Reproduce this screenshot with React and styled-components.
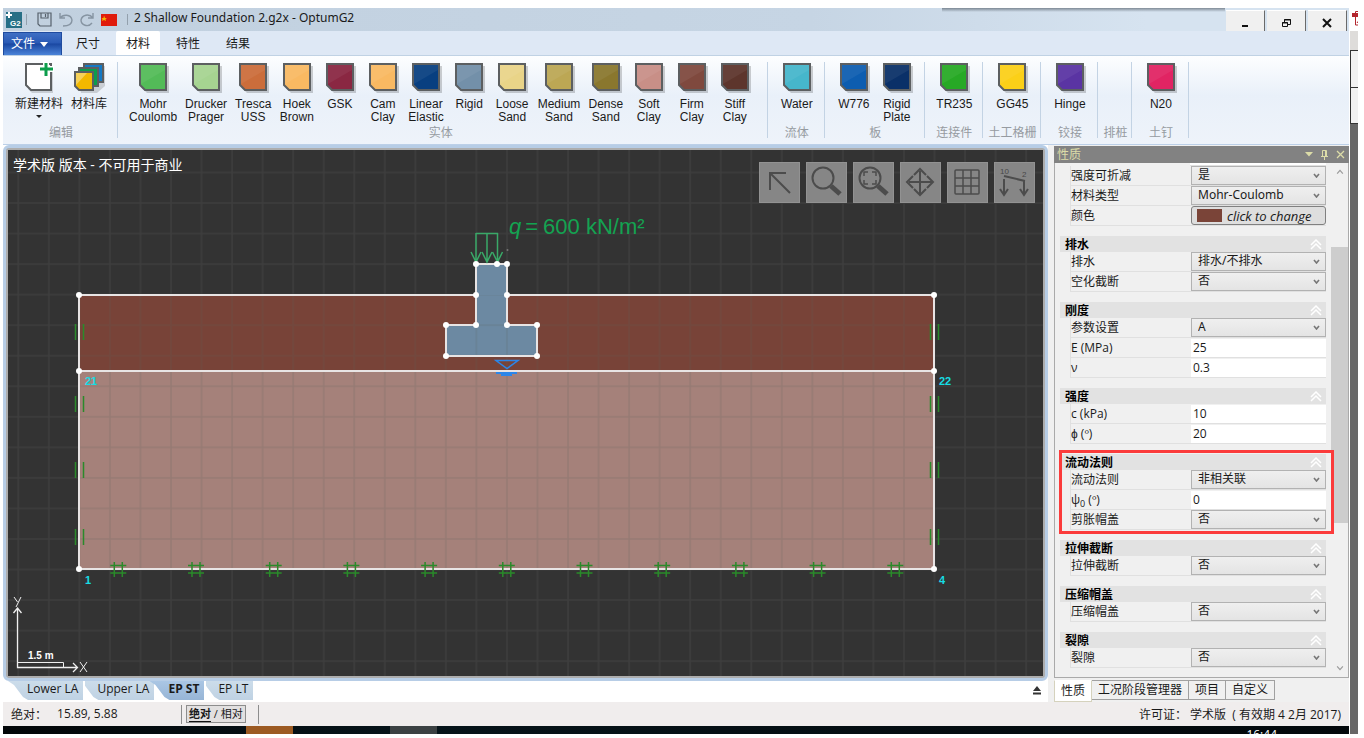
import React from 'react';
import styled, { createGlobalStyle } from 'styled-components';

const GlobalStyle = createGlobalStyle`
  * {
    box-sizing: border-box;
  }
  html, body, #root {
    height: 100%;
  }
  body {
    margin: 0;
    background: #fff;
    color: #1a1a1a;
    font-family: 'Open Sans', 'Noto Sans CJK SC', sans-serif;
    font-size: 12px;
  }
  button, input, select {
    font: inherit;
    color: inherit;
  }
  button {
    border: 0;
    padding: 0;
    background: none;
  }
`;

const Desktop = styled.div`
  display: flex;
  height: 100vh;
  min-height: 560px;
  padding: 8px 6px 4px 3px;
`;

const Main = styled.div`
  flex: 1;
  min-width: 0;
  display: flex;
  flex-direction: column;
`;

/* title bar */

const TitleBar = styled.header`
  position: relative;
  display: flex;
  align-items: center;
  height: 23px;
  padding: 0 2px 0 3px;
  background: linear-gradient(90deg, #c1d0df, #c6d5e4 60%, #d6e3f0 85%);

  &::before {
    content: '';
    position: absolute;
    top: 0;
    right: 124px;
    width: 283px;
    height: 4px;
    background: linear-gradient(rgba(70, 80, 90, 0.6), transparent);
  }
`;

const Title = styled.h1`
  flex: 1;
  margin: 0;
  padding: 0 0 3px 6px;
  font-family: 'Noto Sans', sans-serif;
  font-size: 12px;
  font-weight: 400;
  line-height: 16px;
  white-space: nowrap;
`;

const QuickButton = styled.button`
  display: flex;
  align-items: center;
  justify-content: center;
  width: ${(p) => p.$width || 22}px;
  height: 22px;
`;

const TitleDivider = styled.span`
  width: 1px;
  height: 11px;
  margin: ${(p) => p.$margin};
  background: #93a0ad;
`;

const WindowButtons = styled.div`
  display: flex;
  align-self: flex-end;
  gap: 2px;
`;

const WindowButton = styled.button`
  display: flex;
  align-items: center;
  justify-content: center;
  width: 39px;
  height: 21px;
  padding-top: 4px;
  background: #f0f0f0;
  border-top: 1px solid #fff;
  border-right: 1px solid #6a6a6a;
`;

/* ribbon */

const RibbonTabs = styled.nav`
  display: flex;
  align-items: flex-end;
  height: 25px;
  background: #dee8f5;
  border-bottom: 1px solid #c0d2e4;
`;

const FileButton = styled.button`
  width: 59px;
  height: 23px;
  padding-left: 7px;
  text-align: left;
  color: #fff;
  line-height: 20px;
  background: linear-gradient(#3f6fc4, #2a5ab5 45%, #1a48a2 50%, #4b83d8);
  border: 1px solid #1f4b9f;
  border-bottom: 0;

  svg {
    margin-left: 5px;
  }
`;

const RibbonTab = styled.button`
  width: 44px;
  height: 24px;
  margin-left: ${(p) => (p.$first ? 4 : 0)}px;
  border-radius: 2px 2px 0 0;
  background: ${(p) => (p.$active ? '#fff' : 'transparent')};
  margin-right: 6px;
`;

const Ribbon = styled.div`
  display: flex;
  height: 89px;
  padding: 6px 0 6px 1px;
  overflow: hidden;
  background: linear-gradient(#fdfeff, #e9f0f9 45%, #eef3fa);
  border-bottom: 1px solid #bcd0e8;
`;

const RibbonGroup = styled.section`
  flex: none;
  display: flex;
  flex-direction: column;
  justify-content: space-between;
  align-items: center;
  padding: 0 ${(p) => (p.$roomy ? 11 : 6)}px 0 7px;
  border-right: 1px solid #c3d3e4;
`;

const GroupTools = styled.div`
  display: flex;
  height: 64px;
`;

const GroupTitle = styled.h2`
  margin: 0 -2px;
  font-size: 12px;
  font-weight: 400;
  line-height: 10px;
  color: #969ba1;
`;

const Tool = styled.button`
  display: flex;
  flex-direction: column;
  align-items: center;
  min-width: 43px;
  padding: 0 4px;
  font-family: 'Liberation Sans', 'Noto Sans CJK SC', sans-serif;
  line-height: 13px;
  white-space: pre-line;

  > svg {
    flex: none;
    margin-bottom: 5px;
  }
`;

const DropMark = styled.span`
  margin-top: 4px;
  border: 3px solid transparent;
  border-top-color: #222;
  border-bottom: 0;
`;

/* workspace */

const Workspace = styled.div`
  flex: 1;
  min-height: 0;
  display: flex;
  gap: 6px;
  background: #f0f0f0;
`;

const Drawing = styled.main`
  flex: 1;
  min-width: 0;
  display: flex;
  flex-direction: column;
  background: #fff;
`;

const CanvasFrame = styled.div`
  flex: 1;
  min-height: 0;
  position: relative;
  border: 3px solid #b7cde6;
  border-radius: 6px;
  background: #adadad;
  padding: 2px;
`;

const Model = styled.svg`
  display: block;
  width: 100%;
  height: 100%;
  background: #333;
`;

const Watermark = styled.p`
  position: absolute;
  top: 7px;
  left: 7px;
  margin: 0;
  color: #fff;
  font-size: 14px;
  line-height: 20px;
`;

const CanvasTools = styled.div`
  position: absolute;
  top: 14px;
  right: 10px;
  display: flex;
  gap: 6px;
`;

const CanvasTool = styled.button`
  width: 41px;
  height: 41px;
  background: #868686;
  border: 1px solid #929292;

  svg {
    display: block;
  }
`;

const StageBar = styled.div`
  display: flex;
  align-items: flex-start;
  height: 21px;
  padding: 0 7px 0 12px;
`;

const StageTab = styled.button`
  position: relative;
  z-index: ${(p) => (p.$active ? 5 : p.$level)};
  height: 19px;
  margin-left: -7px;
  padding: 0 5px 3px 19px;
  line-height: 14px;
  font-weight: ${(p) => (p.$active ? 700 : 400)};
  background: ${(p) =>
    p.$active
      ? 'linear-gradient(#aac6e4, #97b5d6)'
      : 'linear-gradient(#ccdcea, #bfd2e3)'};
  border-right: 2px solid #fff;
  clip-path: polygon(0 0, 100% 0, 100% 100%, 20px 100%, 15px 16px, 6px 4px);
`;

const Eject = styled.button`
  margin: 5px 0 0 auto;
  line-height: 0;
`;

/* properties */

const Side = styled.aside`
  width: 295px;
  flex: none;
  display: flex;
  flex-direction: column;
  padding-top: 1px;
`;

const PanelTitle = styled.div`
  display: flex;
  align-items: center;
  gap: 8px;
  height: 17px;
  padding: 0 4px 0 3px;
  background: #828282;
  color: #dcdca8;

  h2 {
    flex: 1;
    margin: 0;
    font-size: 12px;
    font-weight: 400;
    line-height: 16px;
  }
  button {
    line-height: 0;
  }
`;

const PanelBody = styled.div`
  flex: 1;
  min-height: 0;
  display: flex;
  gap: 5px;
  padding-left: 5px;
  background: #f0f0f0;
  border: 1px solid #aaa;
  border-top: 0;
`;

const Properties = styled.form`
  flex: 1;
  min-width: 0;
`;

const CutRow = styled.div`
  height: 3px;
  margin: 0 0 0 130px;
  border-bottom: 1px solid #e0e0e0;
  background: #fff;
`;

const PropertyGroup = styled.section`
  position: relative;
  margin-bottom: 10px;
`;

const GroupHeader = styled.h3`
  display: flex;
  align-items: center;
  justify-content: space-between;
  height: 16px;
  margin: 0;
  padding: 0 4px 0 5px;
  font-size: 12px;
  font-weight: 700;
  color: #000;
  background: #e2e2e2;
`;

const Row = styled.div`
  display: grid;
  grid-template-columns: 120px 1fr;
  align-items: center;
  height: 20px;
  margin-left: 10px;
  border-left: 1px solid #e0e0e0;
  border-bottom: 1px solid #e0e0e0;

  label {
    line-height: 16px;
    white-space: nowrap;
  }
  sub {
    font-size: 9px;
    line-height: 0;
  }
`;

const SelectBox = styled.div`
  position: relative;

  select {
    display: block;
    width: 100%;
    height: 19px;
    padding: 0 20px 2px 6px;
    line-height: 14px;
    appearance: none;
    border: 1px solid #b2b2b2;
    border-radius: 0;
    background: linear-gradient(#efefef, #e4e4e4);
    font-family: 'Noto Sans', 'Noto Sans CJK SC', sans-serif;
  }
  svg {
    position: absolute;
    right: 6px;
    top: 7px;
    pointer-events: none;
  }
`;

const ValueInput = styled.input`
  width: 100%;
  height: 18px;
  padding: 0 2px;
  border: 0;
  background: #fff;
`;

const ColorButton = styled.button`
  display: flex;
  align-items: center;
  gap: 5px;
  width: 100%;
  height: 19px;
  padding: 0 5px;
  border: 1px solid #808080;
  border-radius: 3px;
  background: #dedede;
  font-size: 13px;
  font-style: italic;
  line-height: 16px;

  span {
    width: 25px;
    height: 13px;
    background: #7a4438;
  }
`;

const Highlight = styled.span`
  position: absolute;
  top: -4px;
  left: -1px;
  right: -8px;
  bottom: -4px;
  border: 3px solid #fb3b3b;
  pointer-events: none;
`;

const ScrollBar = styled.div`
  display: flex;
  flex-direction: column;
  align-items: center;
  width: 17px;
  padding: 6px 0;

  svg:last-child {
    margin-top: auto;
  }
`;

const Thumb = styled.div`
  width: 17px;
  height: 276px;
  margin-top: 72px;
  background: #cdcdcd;
`;

const PanelTabs = styled.div`
  display: flex;
  align-items: flex-start;
  height: 24px;
  padding-top: 2px;
`;

const PanelTab = styled.button`
  height: ${(p) => (p.$active ? 22 : 20)}px;
  padding: 0 6px;
  line-height: 16px;
  background: ${(p) => (p.$active ? '#fff' : '#f0f0f0')};
  border: 1px solid ${(p) => (p.$active ? '#d5d2bd' : '#a0a0a0')};
  border-left-width: ${(p) => (p.$active ? 1 : 0)}px;
  border-top-color: ${(p) => (p.$active ? '#fff' : '#a0a0a0')};
`;

/* bottom bars */

const StatusBar = styled.footer`
  display: flex;
  align-items: center;
  height: 24px;
  padding: 0 8px;
  background: #f0eded;
  white-space: pre;
`;

const Coordinates = styled.div`
  display: flex;
  gap: 10px;
  width: 170px;
`;

const StatusDivider = styled.span`
  width: 1px;
  height: 19px;
  background: #8d8d8d;
`;

const ModeButton = styled.button`
  height: 18px;
  margin: 0 12px 0 4px;
  padding: 0 2px;
  font-size: 11px;
  line-height: 14px;
  border: 1px solid #8d8d8d;
  background: #e2e0e0;

  b {
    border-bottom: 1px solid #111;
  }
`;

const License = styled.div`
  margin-left: auto;
`;

const TaskBar = styled.div`
  display: flex;
  height: 8px;
  overflow: hidden;
  padding-left: 243px;
  background: linear-gradient(90deg, #020608, #06141a 30%, #03080b);
`;

const TaskItem = styled.span`
  width: 47px;
  margin-right: 97px;
  background: ${(p) => p.$color};
`;

const Clock = styled.time`
  margin: 2px 72px 0 auto;
  color: #fff;
  line-height: 14px;
`;

/* the other window peeking out at the right */

const Behind = styled.div`
  display: flex;
  flex-direction: column;
  width: 8px;
  flex: none;
  margin-left: 1px;
  background: #676767;
`;

const BehindIcon = styled.div`
  height: 23px;
  padding: 2px 0 0 2px;
  background: #fff;
  overflow: hidden;
`;

const BehindBar = styled.div`
  height: ${(p) => p.$height}px;
  background: ${(p) => p.$color};
  border-bottom: 1px solid #333;
  border-left: ${(p) => (p.$edge ? '1px solid #333' : 0)};
`;

const solids = [
  ['Mohr\nCoulomb', '#53bb58'],
  ['Drucker\nPrager', '#a6d491'],
  ['Tresca\nUSS', '#cb6d3b'],
  ['Hoek\nBrown', '#f9b962'],
  ['GSK', '#8a2742'],
  ['Cam\nClay', '#f9b962'],
  ['Linear\nElastic', '#083f80'],
  ['Rigid', '#7390a9'],
  ['Loose\nSand', '#e9d488'],
  ['Medium\nSand', '#bca754'],
  ['Dense\nSand', '#8a772e'],
  ['Soft\nClay', '#c88f87'],
  ['Firm\nClay', '#7f493e'],
  ['Stiff\nClay', '#5d352c'],
];

const groups = [
  { title: '实体', tools: solids, roomy: true },
  { title: '流体', tools: [['Water', '#46b6cb']] },
  { title: '板', tools: [['W776', '#0d5db0'], ['Rigid\nPlate', '#0a3068']] },
  { title: '连接件', tools: [['TR235', '#27a925']] },
  { title: '土工格栅', tools: [['GG45', '#fbd018']] },
  { title: '铰接', tools: [['Hinge', '#5a34a3']] },
  { title: '排桩', tools: [] },
  { title: '土钉', tools: [['N20', '#e12463']] },
];

const properties = [
  {
    rows: [
      { label: '强度可折减', options: ['是', '否'] },
      { label: '材料类型', options: ['Mohr-Coulomb'] },
      { label: '颜色', color: true },
    ],
  },
  {
    title: '排水',
    rows: [
      { label: '排水', options: ['排水/不排水'] },
      { label: '空化截断', options: ['否', '是'] },
    ],
  },
  {
    title: '刚度',
    rows: [
      { label: '参数设置', options: ['A'] },
      { label: 'E (MPa)', value: '25' },
      { label: 'ν', value: '0.3' },
    ],
  },
  {
    title: '强度',
    rows: [
      { label: 'c (kPa)', value: '10' },
      { label: 'ϕ (º)', value: '20' },
    ],
  },
  {
    title: '流动法则',
    highlight: true,
    rows: [
      { label: '流动法则', options: ['非相关联'] },
      { label: <>ψ<sub>0</sub> (º)</>, value: '0' },
      { label: '剪胀帽盖', options: ['否', '是'] },
    ],
  },
  { title: '拉伸截断', rows: [{ label: '拉伸截断', options: ['否', '是'] }] },
  { title: '压缩帽盖', rows: [{ label: '压缩帽盖', options: ['否', '是'] }] },
  { title: '裂隙', rows: [{ label: '裂隙', options: ['否', '是'] }] },
];

function Swatch({ color }) {
  return (
    <svg width="32" height="31" viewBox="-1 0 32 31">
      <path d="M4 4H31V31H9L4 26Z" fill="#000" opacity=".18" />
      <path
        d="M2 2H28V28H7L2 23Z"
        fill={color}
        stroke="#5c5f61"
        strokeWidth="2"
      />
      <path d="M3 3H27V8L3 22Z" fill="#fff" opacity=".06" />
    </svg>
  );
}

function NewMaterialIcon() {
  return (
    <svg width="32" height="31" viewBox="0 0 32 31">
      <path d="M5 4H30V31H9L5 27Z" fill="#000" opacity=".15" />
      <path d="M3 2H28V28H8L3 23Z" fill="#fff" stroke="#5c5f61" strokeWidth="2" />
      <path d="M23 0V15M16 7H31" stroke="#fff" strokeWidth="6" />
      <path d="M23 1V14M17 7H30" stroke="#0c9d4c" strokeWidth="3" />
    </svg>
  );
}

function LibraryIcon() {
  return (
    <svg width="32" height="31" viewBox="0 0 32 31">
      <path d="M4 13L13 4H32V24L24 31H8Z" fill="#000" opacity=".15" />
      <g stroke="#5c5f61" strokeWidth="2">
        <path d="M11 2H30V20H14L11 17Z" fill="#1579c4" />
        <path d="M6 6H25V24H9L6 21Z" fill="#0c9d4c" />
        <path d="M2 10H20V28H6L2 24Z" fill="#f2b800" />
      </g>
      <path d="M3 11H14L3 23Z" fill="#fff" opacity=".35" />
    </svg>
  );
}

function Chevron({ size = 5, flip, color = '#777', weight = 1.6 }) {
  return (
    <svg width={size + 2} height={size} viewBox="0 0 7 5">
      <path
        d={flip ? 'M1 4L3.5 1L6 4' : 'M1 1L3.5 4L6 1'}
        fill="none"
        stroke={color}
        strokeWidth={weight}
      />
    </svg>
  );
}

function Property({ id, row }) {
  return (
    <Row>
      <label htmlFor={id}>{row.label}</label>
      {row.options && (
        <SelectBox>
          <select id={id}>
            {row.options.map((o) => (
              <option key={o}>{o}</option>
            ))}
          </select>
          <Chevron />
        </SelectBox>
      )}
      {row.value && <ValueInput id={id} defaultValue={row.value} />}
      {row.color && (
        <ColorButton id={id} type="button">
          <span />
          click to change
        </ColorButton>
      )}
    </Row>
  );
}

const nodes = [
  [71, 145], [926, 145], [71, 221], [926, 221], [71, 419], [926, 419],
  [468, 114], [489, 114], [499, 114], [468, 145], [499, 145], [468, 175],
  [499, 175], [438, 175], [529, 175], [438, 206], [529, 206],
];

const toolIcons = [
  <path key="a" d="M10 27V10H26M10 10L30 30" />,
  <g key="b">
    <circle cx="16" cy="15" r="10.5" />
    <path d="M24 23L33 31" strokeWidth="5" />
  </g>,
  <g key="c">
    <circle cx="16" cy="15" r="10.5" />
    <path d="M24 23L33 31" strokeWidth="5" />
    <path d="M10 13V9H14M18 9H22V13M22 17V21H18M14 21H10V17" strokeWidth="1.5" />
  </g>,
  <g key="d">
    <path d="M19 8V31M8 19H31" />
    <path d="M13 12L19 6L25 12M13 26L19 32L25 26M12 13L6 19L12 25M26 13L32 19L26 25" />
  </g>,
  <g key="e" strokeWidth="1.5">
    <rect x="7" y="7" width="24" height="24" rx="1" />
    <path d="M15 7V31M23 7V31M7 15H31M7 23H31" />
  </g>,
  <g key="f">
    <path d="M9 13L30 18M9 16V32M29 18V32M5 26L9 32L13 26M25 26L29 32L33 26" />
    <g fill="#484848" stroke="none" fontSize="8" fontFamily="Liberation Sans, sans-serif">
      <text x="5" y="11">10</text>
      <text x="27" y="14">2</text>
    </g>
  </g>,
];
const toolNames = ['选择', '缩放', '全部缩放', '平移', '网格', '荷载'];

function GridPattern({ id, color, opacity }) {
  return (
    <pattern id={id} x="9.3" y="21.5" width="30.54" height="30.54" patternUnits="userSpaceOnUse">
      <path d="M0 1H30.54M1 0V30.54" stroke={color} strokeOpacity={opacity} strokeWidth="1.5" />
    </pattern>
  );
}

function FoundationModel() {
  return (
    <Model>
      <defs>
        <GridPattern id="grid" color="#fff" opacity=".05" />
        <GridPattern id="soilGrid" color="#5c6058" opacity=".2" />
      </defs>
      <rect width="100%" height="100%" fill="url(#grid)" />
      <rect x="71" y="145" width="855" height="76" fill="#784338" />
      <rect x="71" y="221" width="855" height="198" fill="#a5817a" />
      <path d="M468 114H499V175H529V206H438V175H468Z" fill="#6c89a2" />
      <rect x="71" y="145" width="855" height="274" fill="url(#soilGrid)" />

      <g fill="none" stroke="#e8e4e4" strokeWidth="2">
        <path d="M468 145H71V419H926V145H499" />
        <path d="M71 221H926" />
        <path d="M468 114H499V175H529V206H438V175H468Z" />
      </g>

      <g stroke="#2a8a2a" strokeWidth="1.5">
        {[182, 254, 320, 387].map((y) => (
          <path key={y} d={`M67.5 ${y - 8}v16M75.5 ${y - 8}v16M922.5 ${y - 8}v16M930.5 ${y - 8}v16`} />
        ))}
        {[0, 1, 2, 3, 4, 5, 6, 7, 8, 9, 10].map((i) => (
          <path
            key={i}
            transform={`translate(${110.3 + i * 77.7} 419)`}
            d="M-4 -7V8M4 -7V8M-8 -3.5H8M-8 4H8"
          />
        ))}
      </g>

      <g fill="none" stroke="#3aa968" strokeWidth="1.5">
        <path d="M468 83.5H490" />
        {[468, 479, 489.5].map((x) => (
          <path key={x} d={`M${x} 83V112M${x - 5} 102L${x} 112L${x + 5} 102`} />
        ))}
      </g>
      <circle cx="499.500" cy="100" r="1" fill="#777" />

      <g fill="#fff">
        {nodes.map(([x, y]) => (
          <circle key={`${x}-${y}`} cx={x} cy={y} r="3" />
        ))}
      </g>

      <text x="501" y="84" fill="#13a351" fontSize="22" fontFamily="Liberation Sans, sans-serif">
        <tspan fontStyle="italic">q</tspan>
        <tspan dx="4">=</tspan>
        <tspan dx="5">600 kN/m²</tspan>
      </text>

      <g fill="none" stroke="#2c86e8">
        <path d="M488 210.5H510L499 218.5Z" strokeWidth="1.5" />
        <path d="M488 223H509M493 225H504" strokeWidth="2" />
      </g>

      <g fill="#16dde4" fontSize="11" fontWeight="700" fontFamily="Liberation Sans, sans-serif">
        <text x="77" y="235">21</text>
        <text x="931" y="235">22</text>
        <text x="77" y="434">1</text>
        <text x="931" y="434">4</text>
      </g>

      <g fill="none" stroke="#f0f0f0">
        <path d="M9.5 458V517.5H69M5.5 463L9.5 458L13.5 463M65 513L69.5 517.5L65 522" strokeWidth="1.3" />
        <path d="M9.5 512.5H55.5V517.5" />
        <path d="M6 447L9.5 452M13 447L8 457M72 512L79 522M79 512L72 522" />
      </g>
      <text x="20" y="509" fill="#fff" fontSize="10" fontWeight="700" fontFamily="Liberation Sans, sans-serif">
        1.5 m
      </text>
    </Model>
  );
}

export default function App() {
  return (
    <>
      <GlobalStyle />
      <Desktop>
        <Main>
          <TitleBar>
            <svg width="16" height="16" viewBox="0 0 16 16" aria-hidden="true">
              <rect width="16" height="16" fill="#276f86" />
              <path d="M3 0V6M0 3H6" stroke="#fff" strokeWidth="2" />
              <text x="4" y="14" fill="#fff" fontSize="8" fontWeight="700" fontFamily="Liberation Sans, sans-serif">G2</text>
            </svg>
            <TitleDivider $margin="0 6px 0 4px" />
            <QuickButton aria-label="保存">
              <svg width="15" height="15" viewBox="0 0 15 15" fill="none" stroke="#56616c" strokeWidth="1.2">
                <path d="M1 1H14V14H3L1 12ZM4 1V6H11V1M8.500 2V5" />
              </svg>
            </QuickButton>
            <QuickButton aria-label="撤销" $width={21}>
              <svg width="14" height="15" viewBox="0 0 14 15" fill="none" stroke="#8694a2" strokeWidth="1.4">
                <path d="M1 1V6H6M1 6C4 2 12 2 13 8C13 12 9 14 4 14" />
              </svg>
            </QuickButton>
            <QuickButton aria-label="重做">
              <svg width="14" height="15" viewBox="0 0 14 15" fill="none" stroke="#8694a2" strokeWidth="1.4">
                <path d="M13 1V6H8M13 6C9 1 2 3 1 8C1 13 8 16 12 11" />
              </svg>
            </QuickButton>
            <QuickButton aria-label="语言">
              <svg width="16" height="12" viewBox="0 0 16 12">
                <rect width="16" height="12" fill="#e01b0c" />
                <path d="M3 1.500L4 4L6 4L4.500 5L5 7L3 6L1 7L1.500 5L.5 4H2.500Z" fill="#f5b400" />
              </svg>
            </QuickButton>
            <TitleDivider $margin="0 0 0 7px" />
            <Title>2 Shallow Foundation 2.g2x - OptumG2</Title>
            <WindowButtons>
              <WindowButton aria-label="最小化">
                <svg width="12" height="12" viewBox="0 0 12 12">
                  <path d="M3 9H9" stroke="#111" strokeWidth="2" />
                </svg>
              </WindowButton>
              <WindowButton aria-label="还原">
                <svg width="12" height="12" viewBox="0 0 12 12" fill="#f0f0f0" stroke="#111">
                  <path d="M4.500 2.500H10.500V7.500H4.500ZM4 3H11" />
                  <path d="M2.500 5.500H7.500V9.500H2.500ZM2 6H8" />
                </svg>
              </WindowButton>
              <WindowButton aria-label="关闭">
                <svg width="12" height="12" viewBox="0 0 12 12">
                  <path d="M2 2L10 10M10 2L2 10" stroke="#111" strokeWidth="2" />
                </svg>
              </WindowButton>
            </WindowButtons>
          </TitleBar>

          <RibbonTabs>
            <FileButton>
              文件
              <svg width="8" height="6" viewBox="0 0 8 6">
                <path d="M0 0H8L4 5Z" fill="#fff" />
              </svg>
            </FileButton>
            <RibbonTab $first>尺寸</RibbonTab>
            <RibbonTab $active>材料</RibbonTab>
            <RibbonTab>特性</RibbonTab>
            <RibbonTab>结果</RibbonTab>
          </RibbonTabs>

          <Ribbon>
            <RibbonGroup>
              <GroupTools>
                <Tool>
                  <NewMaterialIcon />
                  新建材料
                  <DropMark />
                </Tool>
                <Tool>
                  <LibraryIcon />
                  材料库
                </Tool>
              </GroupTools>
              <GroupTitle>编辑</GroupTitle>
            </RibbonGroup>
            {groups.map((group) => (
              <RibbonGroup key={group.title} $roomy={group.roomy}>
                <GroupTools>
                  {group.tools.map(([name, color]) => (
                    <Tool key={name}>
                      <Swatch color={color} />
                      {name}
                    </Tool>
                  ))}
                </GroupTools>
                <GroupTitle>{group.title}</GroupTitle>
              </RibbonGroup>
            ))}
          </Ribbon>

          <Workspace>
            <Drawing>
              <CanvasFrame>
                <FoundationModel />
                <Watermark>学术版 版本 - 不可用于商业</Watermark>
                <CanvasTools>
                  {toolIcons.map((icon, i) => (
                    <CanvasTool key={toolNames[i]} aria-label={toolNames[i]}>
                      <svg width="39" height="39" fill="none" stroke="#4c4c4c" strokeWidth="2">
                        {icon}
                      </svg>
                    </CanvasTool>
                  ))}
                </CanvasTools>
              </CanvasFrame>
              <StageBar>
                <StageTab $level={4}>Lower LA</StageTab>
                <StageTab $level={3}>Upper LA</StageTab>
                <StageTab $active>EP ST</StageTab>
                <StageTab $level={1}>EP LT</StageTab>
                <Eject aria-label="展开">
                  <svg width="8" height="9" viewBox="0 0 8 9" fill="#333">
                    <path d="M0 5L4 0L8 5ZM0 6.500H8V8.500H0Z" />
                  </svg>
                </Eject>
              </StageBar>
            </Drawing>

            <Side>
              <PanelTitle>
                <h2>性质</h2>
                <button aria-label="菜单">
                  <svg width="8" height="5" viewBox="0 0 8 5">
                    <path d="M0 0H8L4 4.500Z" fill="#dcdca8" />
                  </svg>
                </button>
                <button aria-label="固定">
                  <svg width="7" height="10" viewBox="0 0 7 10" fill="none" stroke="#dcdca8">
                    <path d="M1.500 6V.5H5.500V6M4.500 1V6M0 6.500H7M3.500 7V10" />
                  </svg>
                </button>
                <button aria-label="关闭面板">
                  <svg width="9" height="9" viewBox="0 0 9 9">
                    <path d="M1 1L8 8M8 1L1 8" stroke="#dcdca8" strokeWidth="1.300" />
                  </svg>
                </button>
              </PanelTitle>
              <PanelBody>
                <Properties>
                  <CutRow />
                  {properties.map((group, g) => (
                    <PropertyGroup key={g}>
                      {group.title && (
                        <GroupHeader>
                          {group.title}
                          <svg width="12" height="11" viewBox="0 0 12 11" fill="none" stroke="#fff" strokeWidth="1.500">
                            <path d="M1 6L6 1L11 6M1 10L6 5L11 10" />
                          </svg>
                        </GroupHeader>
                      )}
                      {group.rows.map((row, r) => (
                        <Property key={r} id={`prop-${g}-${r}`} row={row} />
                      ))}
                      {group.highlight && <Highlight />}
                    </PropertyGroup>
                  ))}
                </Properties>
                <ScrollBar>
                  <Chevron size={6} flip color="#999" weight={1} />
                  <Thumb />
                  <Chevron size={6} color="#999" weight={1} />
                </ScrollBar>
              </PanelBody>
              <PanelTabs>
                <PanelTab $active>性质</PanelTab>
                <PanelTab>工况阶段管理器</PanelTab>
                <PanelTab>项目</PanelTab>
                <PanelTab>自定义</PanelTab>
              </PanelTabs>
            </Side>
          </Workspace>

          <StatusBar>
            <Coordinates>
              <span>绝对：</span>
              <span>15.89, 5.88</span>
            </Coordinates>
            <StatusDivider />
            <ModeButton>
              <b>绝对</b> / 相对
            </ModeButton>
            <StatusDivider />
            <License>许可证： 学术版  ( 有效期 4 2月 2017)</License>
          </StatusBar>
          <TaskBar>
            <TaskItem $color="#9c5a22" />
            <TaskItem $color="#3b4143" />
            <Clock>16:44</Clock>
          </TaskBar>
        </Main>

        <Behind>
          <BehindIcon>
            <svg width="14" height="16" viewBox="0 0 14 16" fill="none" stroke="#b3262e">
              <path d="M3.500 1.500H13V15H3.500Z" />
              <path d="M0 5H8" strokeWidth="4" />
              <path d="M5 13L8 9" />
            </svg>
          </BehindIcon>
          <BehindBar $height={20} $color="#dedcda" />
          <BehindBar $height={37} $color="#f1f1f1" $edge />
          <BehindBar $height={36} $color="#f1f1f1" $edge />
        </Behind>
      </Desktop>
    </>
  );
}
